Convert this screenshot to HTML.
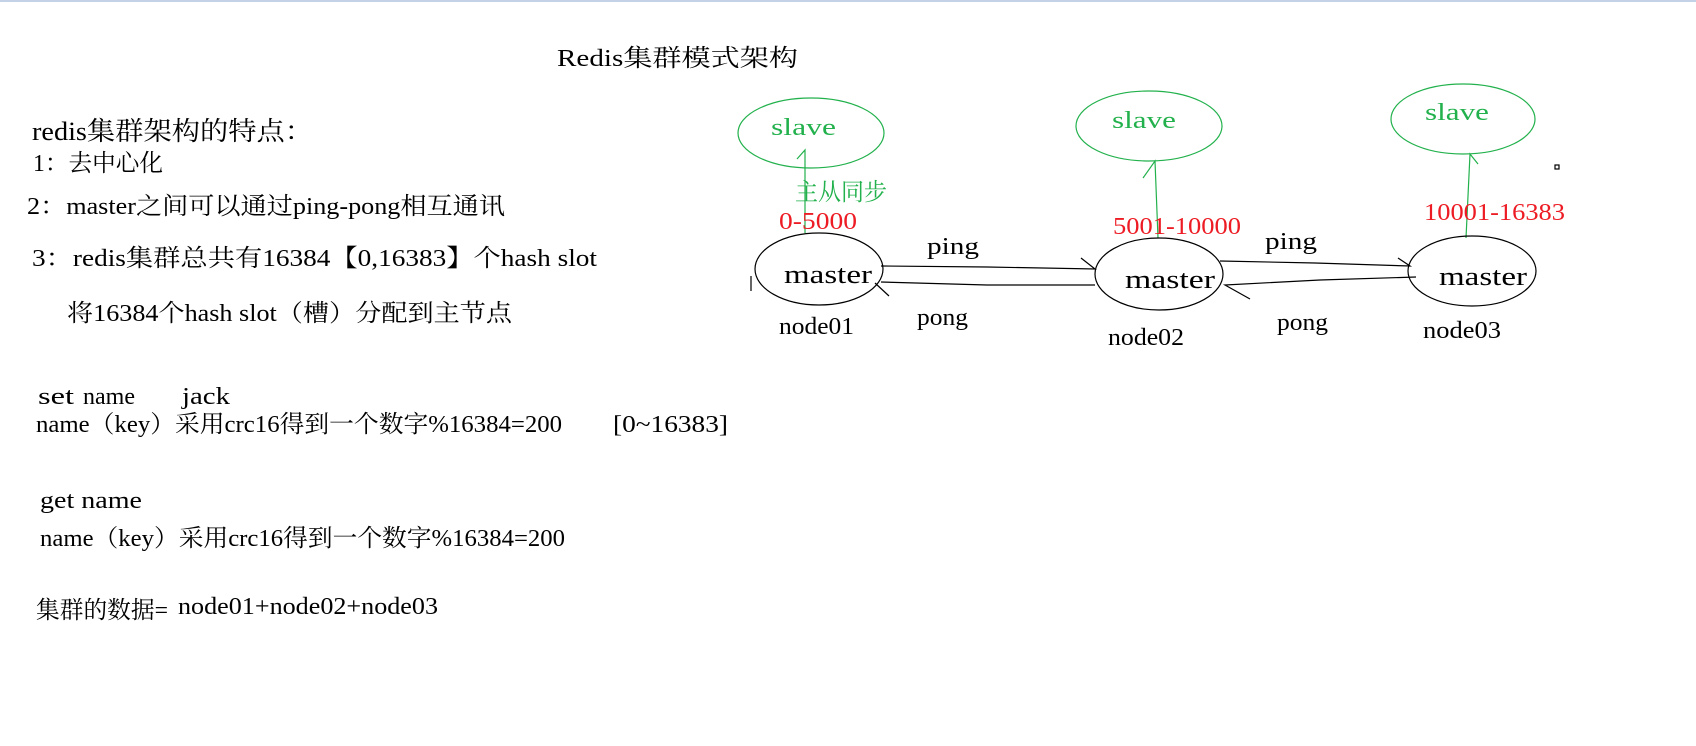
<!DOCTYPE html>
<html><head><meta charset="utf-8">
<style>
html,body{margin:0;padding:0;background:#fff;}
body{width:1696px;height:746px;position:relative;overflow:hidden;}
.top{position:absolute;left:0;top:0;width:1696px;height:2px;background:#c3d2e6;}
.t{position:absolute;white-space:pre;font-family:"Liberation Serif","Noto Serif CJK SC","Noto Sans CJK SC",serif;font-size:24px;line-height:1;color:#000;transform-origin:0 50%;}
.g{color:#22b14c}.r{color:#ed1c24}
svg{position:absolute;left:0;top:0;}
</style></head><body>
<div class="top"></div>
<svg width="1696" height="746" fill="none" stroke-width="1.2">
<g stroke="#22b14c">
<ellipse cx="811" cy="133" rx="73" ry="35"/>
<ellipse cx="1149" cy="126" rx="73" ry="35"/>
<ellipse cx="1463" cy="119" rx="72" ry="35"/>
<path d="M805 233 L805 150 L797 159"/>
<path d="M1158 238 L1155 161 L1143 178"/>
<path d="M1466 238 L1470 154 L1478 164"/>
</g>
<g stroke="#000">
<ellipse cx="819" cy="269" rx="64" ry="36"/>
<ellipse cx="1159" cy="274" rx="64" ry="36"/>
<ellipse cx="1472" cy="271" rx="64" ry="35"/>
<path d="M881 266 L987 267 L1095 269 L1081 258"/>
<path d="M1095 285 L987 285 L881 282"/>
<path d="M875 283 L889 296"/>
<path d="M1220 261 L1315 263 L1410 266 L1398 258"/>
<path d="M1416 277 L1320 280 L1225 285 L1250 299"/>
<rect x="1555" y="165" width="4" height="4"/>
<path d="M751 276 L751 291"/>
</g>
</svg>

<div class="t" style="left:557px;top:59px" tw="241">Redis集群模式架构</div>
<div class="t" style="left:32px;top:132px;font-size:26px" tw="281">redis集群架构的特点：</div>
<div class="t" style="left:33px;top:164px" tw="130">1：去中心化</div>
<div class="t" style="left:27px;top:207px" tw="478">2：master之间可以通过ping-pong相互通讯</div>
<div class="t" style="left:32px;top:259px" tw="565">3：redis集群总共有16384【0,16383】个hash slot</div>
<div class="t" style="left:67px;top:314px" tw="445">将16384个hash slot（槽）分配到主节点</div>
<div class="t" style="left:38px;top:397px" tw="36">set</div>
<div class="t" style="left:83px;top:397px" tw="52">name</div>
<div class="t" style="left:182px;top:397px" tw="48">jack</div>
<div class="t" style="left:36px;top:425px" tw="526">name（key）采用crc16得到一个数字%16384=200</div>
<div class="t" style="left:613px;top:425px" tw="115">[0~16383]</div>
<div class="t" style="left:40px;top:501px" tw="102">get name</div>
<div class="t" style="left:40px;top:539px" tw="525">name（key）采用crc16得到一个数字%16384=200</div>
<div class="t" style="left:36px;top:611px" tw="132">集群的数据=</div>
<div class="t" style="left:178px;top:607px" tw="260">node01+node02+node03</div>

<div class="t g" style="left:771px;top:128px" tw="65">slave</div>
<div class="t g" style="left:1112px;top:121px" tw="64">slave</div>
<div class="t g" style="left:1425px;top:113px" tw="64">slave</div>
<div class="t g" style="left:795px;top:193px" tw="92">主从同步</div>
<div class="t r" style="left:779px;top:222px" tw="78">0-5000</div>
<div class="t r" style="left:1113px;top:227px" tw="128">5001-10000</div>
<div class="t r" style="left:1424px;top:213px" tw="141">10001-16383</div>
<div class="t" style="left:784px;top:275px;font-size:26px" tw="88">master</div>
<div class="t" style="left:1125px;top:280px;font-size:26px" tw="90">master</div>
<div class="t" style="left:1439px;top:277px;font-size:26px" tw="88">master</div>
<div class="t" style="left:779px;top:327px" tw="75">node01</div>
<div class="t" style="left:1108px;top:338px" tw="76">node02</div>
<div class="t" style="left:1423px;top:331px" tw="78">node03</div>
<div class="t" style="left:927px;top:247px" tw="52">ping</div>
<div class="t" style="left:917px;top:318px" tw="51">pong</div>
<div class="t" style="left:1265px;top:242px" tw="52">ping</div>
<div class="t" style="left:1277px;top:323px" tw="51">pong</div>
<script>
document.querySelectorAll('.t').forEach(function(e){
  var tw=parseFloat(e.getAttribute('tw'));
  var w=e.getBoundingClientRect().width;
  var s=w?tw/w:1;
  e.style.transform='translateY(-50%) scaleX('+s+')';
});
</script>
</body></html>
